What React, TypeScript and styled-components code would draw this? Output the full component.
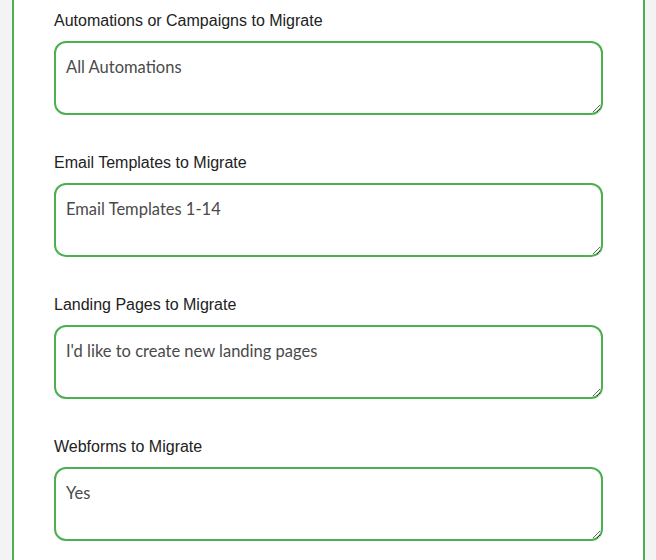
import React from 'react';
import styled, { createGlobalStyle } from 'styled-components';

const fields = [
    { label: 'Automations or Campaigns to Migrate', value: 'All Automations' },
    { label: 'Email Templates to Migrate', value: 'Email Templates 1-14' },
    { label: 'Landing Pages to Migrate', value: "I'd like to create new landing pages" },
    { label: 'Webforms to Migrate', value: 'Yes' },
];

const App: React.FC = () => {
    return (
        <Page>
            <GlobalStyle/>
            <Panel>
                {fields.map(field => (
                    <Field key={field.label}>
                        <Label>{field.label}</Label>
                        <TextArea defaultValue={field.value}/>
                    </Field>
                ))}
            </Panel>
        </Page>
    );
};

export default App;

const GlobalStyle = createGlobalStyle`
  body {
    margin: 0;
    background: #f3f3f3;
    font-family: "Liberation Sans", Arial, sans-serif;
  }
`;
const Page = styled.div`
  padding: 0 11px 0 12px;
  height: 560px;
  overflow: hidden;
`;
const Panel = styled.div`
  background: #ffffff;
  border-left: 2px solid #4caf50;
  border-right: 2px solid #4caf50;
  padding: 12px 40px 40px 40px;
  display: flex;
  flex-direction: column;
  gap: 39px;
  min-height: 100%;
  box-sizing: border-box;
`;
const Field = styled.div`
  display: flex;
  flex-direction: column;
  gap: 11px;
`;
const Label = styled.label`
  font-size: 16px;
  line-height: 18px;
  color: #222222;
`;
const TextArea = styled.textarea`
  box-sizing: border-box;
  width: 100%;
  height: 74px;
  border: 2px solid #4caf50;
  border-radius: 12px;
  padding: 14px 10px 12px;
  font-family: Lato, "Open Sans", sans-serif;
  font-size: 16.5px;
  line-height: 20px;
  color: #4a4a4a;
  outline: none;
  resize: vertical;
  background: #ffffff;
`;
